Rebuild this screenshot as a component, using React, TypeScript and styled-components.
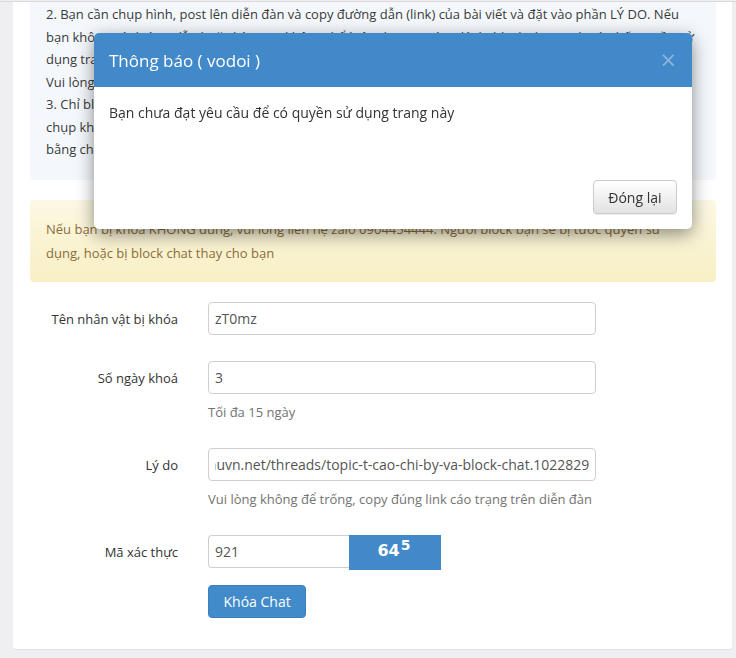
import React, { useLayoutEffect, useRef } from "react";
import styled, { createGlobalStyle } from "styled-components";

const Global = createGlobalStyle`
  html, body { margin: 0; padding: 0; }
  body {
    background: #efeef1;
    font-family: "Open Sans", "Noto Sans", sans-serif;
    font-size: 13px;
    color: #333;
    overflow: hidden;
  }
  * { box-sizing: border-box; }
`;

const Viewport = styled.div`
  height: 658px;
  overflow: hidden;
  border-top: 1px solid #d9d9dc;
  margin-top: 1px;
`;

const Scroller = styled.div`
  margin-top: -12px;
  padding: 0 4px 0 13px;
`;

const Card = styled.div`
  background: #fff;
  border-radius: 0 0 3px 3px;
  box-shadow: 0 1px 1px rgba(0, 0, 0, 0.06);
  padding: 0 16px 31px 17px;
`;

const Notice = styled.div<{ $tone: "info" | "warn" }>`
  border-radius: 4px;
  padding: ${(p) => (p.$tone === "info" ? "13px 16px 19px 16px" : "17px 16px 17px 16px")};
  line-height: ${(p) => (p.$tone === "info" ? "22.5px" : "24px")};
  color: ${(p) => (p.$tone === "info" ? "#3a3a3a" : "#8a6d3b")};
  background: ${(p) =>
    p.$tone === "info"
      ? "#f4f8fc"
      : "linear-gradient(to bottom, #fcf8e3 0%, #f8efc4 100%)"};
  margin-bottom: 20px;
`;

const Form = styled.div`
  display: grid;
  grid-template-columns: 148px 388px;
  column-gap: 30px;
  row-gap: 26px;
  align-items: start;
`;

const Label = styled.div`
  text-align: right;
  line-height: 20px;
  padding-top: 7px;
  color: #333;
`;

const Field = styled.div`
  display: flex;
  flex-direction: column;
`;

const Input = styled.input`
  height: 33px;
  width: 100%;
  border: 1px solid #cfcfcf;
  border-radius: 4px;
  padding: 6px 6px;
  font-family: "Open Sans", sans-serif;
  font-size: 14px;
  color: #555;
  background: #fff;
  outline: none;
`;

const Help = styled.div`
  margin-top: 8px;
  line-height: 20px;
  color: #737373;
`;

const CaptchaRow = styled.div`
  display: flex;
  align-items: flex-start;
`;

const CaptchaInput = styled(Input)`
  width: 141px;
  border-radius: 4px 0 0 4px;
  border-right: none;
`;

const Captcha = styled.div`
  width: 92px;
  height: 35px;
  background: #4289c9;
  color: #fff;
  font-family: "DejaVu Sans", "Open Sans", sans-serif;
  font-weight: bold;
  font-size: 16px;
  display: flex;
  justify-content: center;
  padding-top: 6px;
  padding-right: 2px;
  sup {
    font-size: 14px;
    position: relative;
    top: -4px;
    vertical-align: baseline;
    margin-left: 1px;
  }
`;

const Primary = styled.button`
  margin-top: 15px;
  align-self: flex-start;
  height: 33px;
  padding: 0 14.5px;
  background: #428bca;
  color: #fff;
  border: 1px solid #3a80bd;
  border-radius: 4px;
  font-family: "Open Sans", sans-serif;
  font-size: 14px;
`;

const Modal = styled.div`
  position: fixed;
  left: 94px;
  top: 33px;
  width: 598px;
  background: #fff;
  border-radius: 5px;
  box-shadow: 0 5px 18px rgba(0, 0, 0, 0.45);
  overflow: hidden;
`;

const ModalHeader = styled.div`
  height: 54px;
  background: #4289c9;
  display: flex;
  align-items: center;
  justify-content: space-between;
  padding: 0 15px 0 15px;
`;

const ModalTitle = styled.div`
  color: #fff;
  font-size: 17px;
`;

const Close = styled.span`
  color: #8db4dc;
  font-size: 21px;
  font-family: "DejaVu Sans", sans-serif;
  line-height: 1;
`;

const ModalBody = styled.div`
  height: 78px;
  padding: 15px;
  line-height: 22px;
  font-size: 14px;
  color: #333;
`;

const ModalFooter = styled.div`
  display: flex;
  justify-content: flex-end;
  padding: 15px 15px 15px;
`;

const DefaultBtn = styled.button`
  height: 34px;
  padding: 0 14.5px;
  border: 1px solid #cbcbcb;
  border-radius: 4px;
  background: linear-gradient(to bottom, #fff 0%, #e2e2e2 100%);
  color: #333;
  font-family: "Open Sans", sans-serif;
  font-size: 14px;
  box-shadow: inset 0 1px 0 rgba(255, 255, 255, 0.15), 0 1px 1px rgba(0, 0, 0, 0.07);
`;

function ReasonInput({ value }: { value: string }) {
  const ref = useRef<HTMLInputElement>(null);
  useLayoutEffect(() => {
    if (ref.current) ref.current.scrollLeft = ref.current.scrollWidth;
  }, []);
  return <Input ref={ref} defaultValue={value} />;
}

export default function App() {
  return (
    <>
      <Global />
      <Viewport>
        <Scroller>
          <Card>
            <Notice $tone="info">
              2. Bạn cần chụp hình, post lên diễn đàn và copy đường dẫn (link) của bài viết và đặt vào phần LÝ DO. Nếu
              <br />
              bạn không có đường dẫn hoặc bài post không thể hiện được rõ ràng lý do block chat, sẽ bị từ chối quyền sử
              <br />
              dụng trang này và có thể bị khóa chat ngược lại.
              <br />
              Vui lòng không lạm dụng chức năng này.
              <br />
              3. Chỉ block được những người chơi có cấp độ thấp hơn hoặc bằng bạn. Hình ảnh phải rõ ràng, không
              <br />
              chụp khác kênh, không cắt ghép, không chỉnh sửa nội dung tin nhắn, không che tên nhân vật, không
              <br />
              bằng chứng giả mạo.
            </Notice>
            <Notice $tone="warn">
              Nếu bạn bị khoá KHÔNG đúng, vui lòng liên hệ zalo 0904454444. Người block bạn sẽ bị tước quyền sử
              <br />
              dụng, hoặc bị block chat thay cho bạn
            </Notice>
            <Form>
              <Label>Tên nhân vật bị khóa</Label>
              <Field>
                <Input defaultValue="zT0mz" />
              </Field>
              <Label>Số ngày khoá</Label>
              <Field>
                <Input defaultValue="3" />
                <Help>Tối đa 15 ngày</Help>
              </Field>
              <Label>Lý do</Label>
              <Field>
                <ReasonInput value="https://diendan.thanhuvn.net/threads/topic-t-cao-chi-by-va-block-chat.1022829" />
                <Help>Vui lòng không để trống, copy đúng link cáo trạng trên diễn đàn</Help>
              </Field>
              <Label>Mã xác thực</Label>
              <Field>
                <CaptchaRow>
                  <CaptchaInput defaultValue="921" />
                  <Captcha>
                    64<sup>5</sup>
                  </Captcha>
                </CaptchaRow>
                <Primary>Khóa Chat</Primary>
              </Field>
            </Form>
          </Card>
        </Scroller>
      </Viewport>
      <Modal>
        <ModalHeader>
          <ModalTitle>Thông báo ( vodoi )</ModalTitle>
          <Close>×</Close>
        </ModalHeader>
        <ModalBody>Bạn chưa đạt yêu cầu để có quyền sử dụng trang này</ModalBody>
        <ModalFooter>
          <DefaultBtn>Đóng lại</DefaultBtn>
        </ModalFooter>
      </Modal>
    </>
  );
}
